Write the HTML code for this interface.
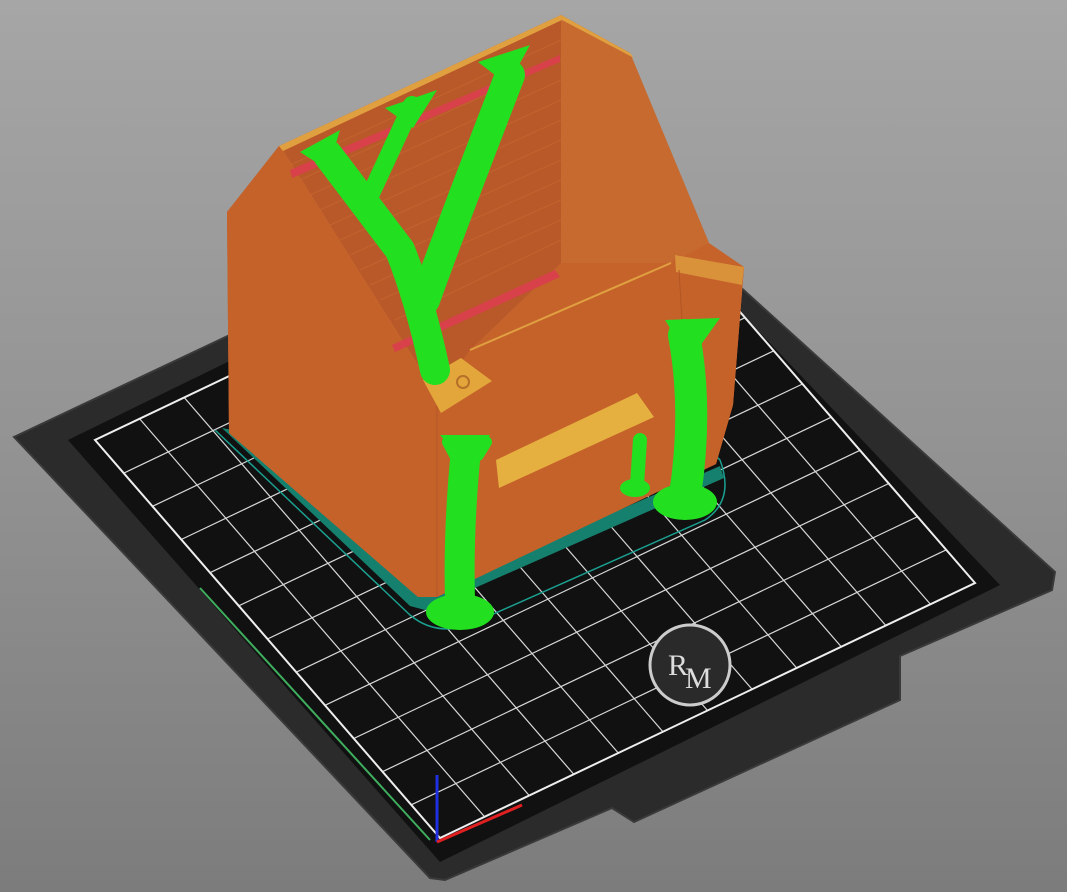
<!DOCTYPE html>
<html><head><meta charset="utf-8"><style>
html,body{margin:0;padding:0;width:1067px;height:892px;overflow:hidden}
body{background:linear-gradient(#a6a6a6,#939393 50%,#7c7c7c)}
svg{position:absolute;left:0;top:0}
</style></head><body>
<svg width="1067" height="892" viewBox="0 0 1067 892">
<polygon points="14,437 600,160 1055,572 1052,590 900,656 900,700 634,822 612,808 445,880 430,878" fill="#2b2b2b" stroke="#3a3a3a" stroke-width="2"/>
<polygon points="68,440 610,175 1000,585 440,862" fill="#111"/>
<g transform="matrix(535,-255,-345,-398,440,838)">
<g stroke="#d8d8d8" stroke-width="1.2" fill="none">
<path vector-effect="non-scaling-stroke" d="M0 0H1M0 .0833H1M0 .1667H1M0 .25H1M0 .3333H1M0 .4167H1M0 .5H1M0 .5833H1M0 .6667H1M0 .75H1M0 .8333H1M0 .9167H1M0 1H1M0 0V1M.0833 0V1M.1667 0V1M.25 0V1M.3333 0V1M.4167 0V1M.5 0V1M.5833 0V1M.6667 0V1M.75 0V1M.8333 0V1M.9167 0V1M1 0V1"/>
</g></g>
<polygon points="95,440 440,838 975,583 630,185" fill="none" stroke="#eee" stroke-width="2"/>
<circle cx="690" cy="665" r="40" fill="#2a2a2a" stroke="#ccc" stroke-width="3"/>
<text x="668" y="675" font-family="Liberation Serif,serif" font-size="30" fill="#ddd">R</text>
<text x="685" y="688" font-family="Liberation Serif,serif" font-size="30" fill="#ddd">M</text>
<line x1="200" y1="588" x2="430" y2="840" stroke="#3fae5e" stroke-width="2"/>
<line x1="437" y1="775" x2="437" y2="842" stroke="#2030e0" stroke-width="3"/>
<line x1="437" y1="842" x2="522" y2="805" stroke="#e02020" stroke-width="3"/>
<path d="M215,430 L410,615 Q440,640 480,620 L705,520 Q735,500 720,460 L690,430" fill="none" stroke="#1aa090" stroke-width="1.5"/>
<polygon points="222,428 232,430 420,597 720,466 724,478 425,610 410,606" fill="#16806e"/>
<polygon points="227,212 279,146 561,15 630,53 709,243 744,267 733,405 716,464 437,597 418,597 229,433" fill="#c5632b"/>
<polygon points="227,212 279,146 423,377 437,405 437,597 418,597 229,433" fill="#c4622a"/>
<polygon points="283,150 561,20 561,263 470,350 437,395" fill="#b9592a"/>
<g stroke="#c96a30" stroke-width="1" opacity=".6">
<path d="M290,165 L561,40M300,180 L561,60M310,195 L561,80M320,210 L561,100M330,225 L561,120M340,240 L561,140M350,255 L561,160M360,270 L561,180M370,285 L561,200M380,300 L561,220M395,320 L561,240M410,340 L540,280"/>
</g>
<polygon points="290,170 560,55 560,62 292,178" fill="#d8404a"/>
<polygon points="392,345 555,270 560,277 395,352" fill="#d8404a"/>
<polygon points="561,15 630,53 709,243 671,263 561,263" fill="#c66a30"/>
<polygon points="561,15 630,53 634,58 562,20" fill="#e0a040"/>
<polygon points="279,146 561,15 562,20 283,151" fill="#e0a040"/>
<polygon points="437,405 470,350 671,263 678,255 744,267 733,405 716,464 437,597" fill="#c5622a"/>
<line x1="470" y1="350" x2="671" y2="263" stroke="#e0a040" stroke-width="2"/>
<polygon points="675,255 744,267 742,285 676,272" fill="#d9923a"/>
<line x1="437" y1="405" x2="437" y2="597" stroke="#b25525" stroke-width="1"/>
<line x1="679" y1="270" x2="682" y2="320" stroke="#b25525" stroke-width="1"/>
<polygon points="423,380 461,358 492,381 441,413" fill="#e3a63a"/>
<circle cx="463" cy="382" r="6" fill="none" stroke="#b5702a" stroke-width="2"/>
<polygon points="496,460 637,393 654,417 499,488" fill="#e6b040"/>
<g fill="none" stroke="#22e020" stroke-linecap="round" stroke-linejoin="round">
<path d="M435,370 Q420,300 400,250 L328,155" stroke-width="30"/>
<path d="M400,250 L368,200 L412,105" stroke-width="18"/>
<path d="M425,300 Q450,230 510,75" stroke-width="30"/>
<path d="M466,450 Q458,530 460,600" stroke-width="30"/>
<path d="M455,455 L448,442M478,455 L486,442" stroke-width="12"/>
<path d="M684,335 Q698,410 685,495" stroke-width="32"/>
<path d="M640,440 L637,485" stroke-width="14"/>
</g>
<polygon points="300,152 340,130 328,170" fill="#22e020"/>
<polygon points="385,108 437,90 413,128" fill="#22e020"/>
<polygon points="478,62 530,45 508,85" fill="#22e020"/>
<ellipse cx="460" cy="612" rx="34" ry="18" fill="#22e020"/>
<ellipse cx="685" cy="502" rx="32" ry="18" fill="#22e020"/>
<ellipse cx="635" cy="488" rx="15" ry="9" fill="#22e020"/>
<polygon points="440,435 490,435 470,470" fill="#22e020"/>
<polygon points="665,320 720,318 690,360" fill="#22e020"/>
</svg>
</body></html>
